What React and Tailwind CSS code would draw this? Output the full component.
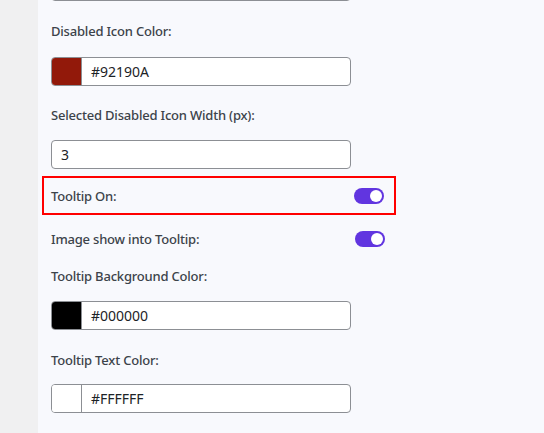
import { useState } from 'react'

function ColorField({ color, value, className = '' }) {
  return (
    <div className={`flex w-[300px] h-[29px] border border-[#8c8f94] rounded-[4px] bg-white overflow-hidden ${className}`}>
      <div className="w-[30px] h-full border-r border-[#8c8f94]" style={{ background: color }} />
      <div className="flex items-center pl-[9px] text-[14px] text-[#1d2327]">{value}</div>
    </div>
  )
}

function Toggle({ on }) {
  return (
    <div className={`w-[30px] h-[16px] rounded-full flex items-center px-[2px] ${on ? 'bg-[#6135e0] justify-end' : 'bg-gray-300 justify-start'}`}>
      <div className="w-[12px] h-[12px] rounded-full bg-white" />
    </div>
  )
}

function Label({ children, className = '' }) {
  return <div className={`text-[13px] leading-[20px] font-medium tracking-[-0.2px] text-[#3c434a] ${className}`}>{children}</div>
}

export default function App() {
  const [tooltipOn] = useState(true)
  const [imageOn] = useState(true)

  return (
    <div className="flex w-[544px] h-[433px] overflow-hidden font-['Noto_Sans','Open_Sans',sans-serif]">
      <div className="w-[38px] shrink-0 bg-[#f0f0f1]" />
      <div className="flex-1 bg-[#f8f9fd] pl-[13px]">
        <ColorField color="#2c5aa0" value="" className="-mt-[28px]" />

        <Label className="mt-[20px]">Disabled Icon Color:</Label>
        <ColorField color="#92190A" value="#92190A" className="mt-[16px]" />

        <Label className="mt-[19px]">Selected Disabled Icon Width (px):</Label>
        <div className="mt-[15px] w-[300px] h-[29px] border border-[#8c8f94] rounded-[4px] bg-white flex items-center pl-[9px] text-[14px] text-[#1d2327]">
          3
        </div>

        <div className="-ml-[9px] mt-[7px] w-[354px] h-[39px] border-2 border-[#ff0000] flex items-center justify-between pl-[7px] pr-[10px]">
          <Label>Tooltip On:</Label>
          <Toggle on={tooltipOn} />
        </div>

        <div className="mt-[9px] w-[334px] h-[30px] flex items-center justify-between">
          <Label>Image show into Tooltip:</Label>
          <Toggle on={imageOn} />
        </div>

        <Label className="mt-[12px]">Tooltip Background Color:</Label>
        <ColorField color="#000000" value="#000000" className="mt-[15px]" />

        <Label className="mt-[20px]">Tooltip Text Color:</Label>
        <ColorField color="#FFFFFF" value="#FFFFFF" className="mt-[14px]" />
      </div>
    </div>
  )
}
